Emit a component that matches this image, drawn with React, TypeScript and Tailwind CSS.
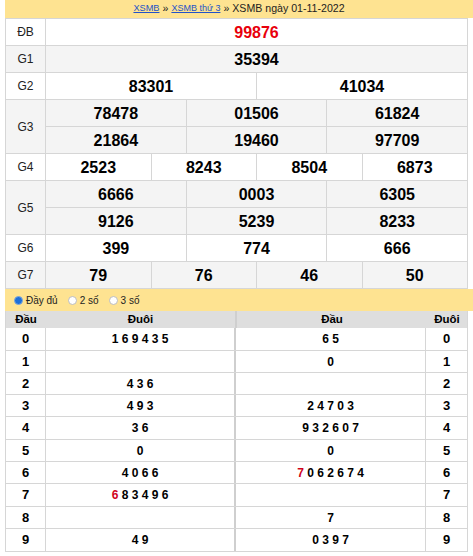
import React from "react";

const B = "border-[#d6d6d6]";

function Label({ t, h }: { t: string; h: string }) {
  return (
    <div className={`w-[40px] shrink-0 border-r ${B} flex items-center justify-center text-[12px] text-[#222] ${h}`}>
      {t}
    </div>
  );
}

function Cells({ nums, red }: { nums: string[]; red?: boolean }) {
  return (
    <div className="flex flex-1 h-[27px]">
      {nums.map((n, i) => (
        <div
          key={i}
          className={`flex-1 basis-0 flex items-center justify-center text-[16px] font-bold ${
            i < nums.length - 1 ? `border-r ${B}` : ""
          } ${red ? "text-[#e8000b]" : "text-black"}`}
        >
          {n}
        </div>
      ))}
    </div>
  );
}

function Row({ label, nums, gray, red }: { label: string; nums: string[]; gray?: boolean; red?: boolean }) {
  return (
    <div className={`flex border-b ${B} ${gray ? "bg-[#f4f4f4]" : "bg-white"}`}>
      <Label t={label} h="h-[26px]" />
      <div className="flex-1 flex -mb-px">
        <Cells nums={nums} red={red} />
      </div>
    </div>
  );
}

function DoubleRow({ label, a, b, gray }: { label: string; a: string[]; b: string[]; gray?: boolean }) {
  return (
    <div className={`flex border-b ${B} ${gray ? "bg-[#f4f4f4]" : "bg-white"}`}>
      <Label t={label} h="h-[53px]" />
      <div className="flex-1 flex flex-col">
        <div className={`flex border-b ${B} h-[27px]`}>
          <Cells nums={a} />
        </div>
        <div className="flex h-[26px]">
          <Cells nums={b} />
        </div>
      </div>
    </div>
  );
}

type Seg = { t: string; red?: boolean };
const loto: { d: string; left: Seg[]; right: Seg[]; h: string }[] = [
  { d: "0", left: [{ t: "1 6 9 4 3 5" }], right: [{ t: "6 5" }], h: "h-[23px]" },
  { d: "1", left: [], right: [{ t: "0" }], h: "h-[22px]" },
  { d: "2", left: [{ t: "4 3 6" }], right: [], h: "h-[22px]" },
  { d: "3", left: [{ t: "4 9 3" }], right: [{ t: "2 4 7 0 3" }], h: "h-[22px]" },
  { d: "4", left: [{ t: "3 6" }], right: [{ t: "9 3 2 6 0 7" }], h: "h-[23px]" },
  { d: "5", left: [{ t: "0" }], right: [{ t: "0" }], h: "h-[22px]" },
  { d: "6", left: [{ t: "4 0 6 6" }], right: [{ t: "7", red: true }, { t: " 0 6 2 6 7 4" }], h: "h-[22px]" },
  { d: "7", left: [{ t: "6", red: true }, { t: " 8 3 4 9 6" }], right: [], h: "h-[23px]" },
  { d: "8", left: [], right: [{ t: "7" }], h: "h-[22px]" },
  { d: "9", left: [{ t: "4 9" }], right: [{ t: "0 3 9 7" }], h: "h-[23px]" },
];

function Segs({ s }: { s: Seg[] }) {
  return (
    <span className="whitespace-pre">
      {s.map((x, i) => (
        <span key={i} className={x.red ? "text-[#d0021b]" : "text-black"}>
          {x.t}
        </span>
      ))}
    </span>
  );
}

function Radio({ on, label }: { on?: boolean; label: string }) {
  return (
    <div className="flex items-center gap-[3px]">
      <div
        className={`w-[9px] h-[9px] rounded-full ${
          on ? "bg-[#1e6fd9] border border-[#7fa7d9]" : "bg-white border border-[#bdbdbd]"
        }`}
      />
      <span className="text-[10px] text-[#222]">{label}</span>
    </div>
  );
}

export default function App() {
  return (
    <div className="w-[473px] h-[556px] overflow-hidden bg-white pl-[5px]" style={{ fontFamily: '"Liberation Sans", Arial, sans-serif' }}>
      <div className="w-[468px] h-[18px] bg-[#fee391] flex items-center justify-center text-[10.6px] text-[#222]">
        <span className="text-[9.2px] text-[#2352c8] underline">XSMB</span>
        <span className="mx-[3px]">»</span>
        <span className="text-[9px] text-[#2352c8] underline">XSMB thứ 3</span>
        <span className="ml-[3px]">» XSMB ngày 01-11-2022</span>
      </div>
      <div className={`w-[463px] border-l border-r border-t ${B}`}>
        <Row label="ĐB" nums={["99876"]} red />
        <Row label="G1" nums={["35394"]} gray />
        <Row label="G2" nums={["83301", "41034"]} />
        <DoubleRow label="G3" a={["78478", "01506", "61824"]} b={["21864", "19460", "97709"]} gray />
        <Row label="G4" nums={["2523", "8243", "8504", "6873"]} />
        <DoubleRow label="G5" a={["6666", "0003", "6305"]} b={["9126", "5239", "8233"]} gray />
        <Row label="G6" nums={["399", "774", "666"]} />
        <Row label="G7" nums={["79", "76", "46", "50"]} gray />
      </div>
      <div className="w-[468px] h-[22px] bg-[#fee391] flex items-center gap-[10px] pl-[9px]">
        <Radio on label="Đầy đủ" />
        <Radio label="2 số" />
        <Radio label="3 số" />
      </div>
      <div className={`w-[463px] border-l border-r ${B}`}>
        <div className="flex h-[17px] bg-[#dedede] text-[11.5px] font-bold text-black">
          <div className="w-[40px] flex items-center justify-center">Đầu</div>
          <div className="w-[191px] flex items-center justify-center border-r-2 border-[#cfcfcf]">Đuôi</div>
          <div className="w-[190px] flex items-center justify-center">Đầu</div>
          <div className="flex-1 flex items-center justify-center">Đuôi</div>
        </div>
        {loto.map((r) => (
          <div key={r.d} className={`flex border-b ${B} ${r.h} box-border bg-white`}>
            <div className={`w-[40px] border-r ${B} flex items-center justify-center text-[13px] font-bold`}>{r.d}</div>
            <div className="w-[190px] border-r-2 border-[#cfcfcf] flex items-center justify-center text-[12px] font-bold">
              <Segs s={r.left} />
            </div>
            <div className={`w-[190px] border-r ${B} flex items-center justify-center text-[12px] font-bold`}>
              <Segs s={r.right} />
            </div>
            <div className="flex-1 flex items-center justify-center text-[13px] font-bold">{r.d}</div>
          </div>
        ))}
      </div>
    </div>
  );
}
